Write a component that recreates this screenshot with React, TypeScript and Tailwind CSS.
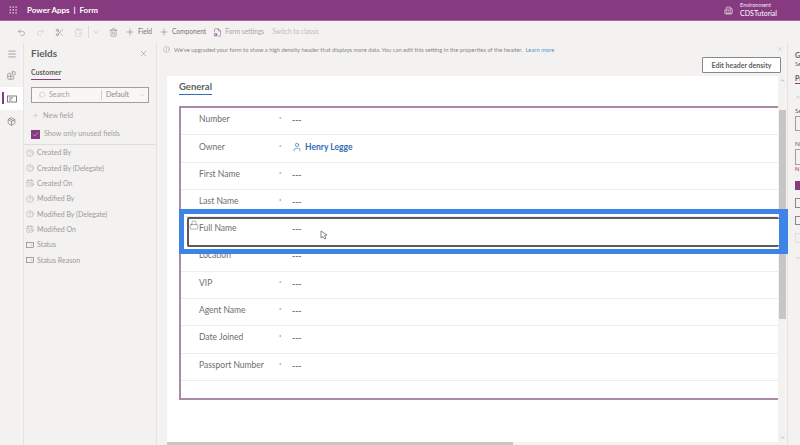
import { Undo2, Redo2, Scissors, ClipboardPaste, ChevronDown, Trash2, Plus, FileCog, Menu, Blocks, Package, X, Search, Check, CircleHelp, CalendarClock, User, Lock, Info, Grip, Building2, ChevronUp } from 'lucide-react';

function StatusIcon({ size = 8, className }: { size?: number; strokeWidth?: number; className?: string }) {
  return (
    <svg width={size} height={size} viewBox="0 0 10 10" fill="none" stroke="currentColor" strokeWidth="0.8" className={className}>
      <rect x="0.5" y="2" width="9" height="6" />
      <path d="M6.5 5h1.500" />
    </svg>
  );
}

const fields = [
  { name: 'Created By', icon: CircleHelp },
  { name: 'Created By (Delegate)', icon: CircleHelp },
  { name: 'Created On', icon: CalendarClock },
  { name: 'Modified By', icon: CircleHelp },
  { name: 'Modified By (Delegate)', icon: CircleHelp },
  { name: 'Modified On', icon: CalendarClock },
  { name: 'Status', icon: StatusIcon },
  { name: 'Status Reason', icon: StatusIcon },
];

const rows = [
  { label: 'Number', req: true },
  { label: 'Owner', req: true, owner: true },
  { label: 'First Name', req: true },
  { label: 'Last Name', req: true },
  { label: 'Full Name', locked: true },
  { label: 'Location' },
  { label: 'VIP', req: true },
  { label: 'Agent Name', req: true },
  { label: 'Date Joined', req: true },
  { label: 'Passport Number', req: true },
];

function FormRow({ row }: { row: (typeof rows)[number] }) {
  // the locked row is drawn by the highlight on top of the form
  if (row.locked) return <div className="h-[27.3px] shrink-0" />;

  return (
    <div className={`flex h-[27.3px] shrink-0 border-b border-[#ececec] pl-[18px] text-[8.5px] leading-[12px] text-[#6f6d6b] ${row.owner ? 'pt-[6px]' : 'pt-[5px]'}`}>
      <div className="w-[80px]">{row.label}</div>
      <div className={`w-[13px] text-[6px] ${row.req ? 'text-[#a4262c]' : 'text-transparent'}`}>*</div>
      {row.owner ? (
        <div className="flex h-[12px] items-center gap-[3px] font-bold text-[#2f6fb5]">
          <User size={10} strokeWidth={1.5} />
          <span>Henry Legge</span>
        </div>
      ) : (
        <div className="pt-[1px] font-bold text-[#7a7876]">---</div>
      )}
    </div>
  );
}

export default function App() {
  return (
    <div className="flex h-[445px] w-[800px] flex-col overflow-hidden bg-[#f3f2f1] font-['Lato',sans-serif]">
      {/* Top bar */}
      <div className="flex h-[21px] shrink-0 items-center border-b border-[#a06a9b] bg-[#863a80] pl-[8px] pr-[23px] text-white">
        <Grip size={10} strokeWidth={1.5} className="opacity-80" />
        <div className="ml-[9px] text-[8px] font-bold">Power Apps&nbsp; |&nbsp; Form</div>
        <div className="ml-auto flex items-center gap-[4px]">
          <Building2 size={9} strokeWidth={1.5} />
          <div className="ml-[3px] leading-none">
            <div className="text-[5.5px] opacity-90">Environment</div>
            <div className="mt-[1px] text-[7px]">CDSTutorial</div>
          </div>
        </div>
      </div>

      {/* Toolbar */}
      <div className="flex h-[22px] shrink-0 items-center pl-[17px] text-[6.6px] text-[#a8a6a4]">
        <Undo2 size={9} strokeWidth={1.25} className="text-[#7a7876]" />
        <Redo2 size={9} strokeWidth={1.25} className="ml-[10px] text-[#c2c0be]" />
        <Scissors size={9} strokeWidth={1.25} className="ml-[10px] text-[#6f6d6b]" />
        <ClipboardPaste size={9} strokeWidth={1.25} className="ml-[10px] text-[#c2c0be]" />
        <div className="ml-[5px] h-[12px] w-px bg-[#dcdad8]" />
        <ChevronDown size={8} strokeWidth={1.25} className="ml-[3px] text-[#a8a6a4]" />
        <Trash2 size={9} strokeWidth={1.25} className="ml-[8.500px] text-[#6f6d6b]" />
        <Plus size={10} strokeWidth={1.1} className="ml-[7.500px] text-[#605e5c]" />
        <span className="ml-[3px] text-[#777573]">Field</span>
        <Plus size={10} strokeWidth={1.1} className="ml-[7px] text-[#605e5c]" />
        <span className="ml-[3px] text-[#777573]">Component</span>
        <FileCog size={9} strokeWidth={1.25} className="ml-[6.500px] text-[#863a80]" />
        <span className="ml-[3.500px]">Form settings</span>
        <span className="ml-[8px] text-[#bdbbb9]">Switch to classic</span>
      </div>

      <div className="flex min-h-0 flex-1">
        {/* Left nav */}
        <div className="flex w-[23px] shrink-0 flex-col">
          <div className="flex h-[21px] items-center justify-center"><Menu size={10} strokeWidth={1.25} className="text-[#605e5c]" /></div>
          <div className="flex h-[23px] items-center justify-center"><Blocks size={9} strokeWidth={1.25} className="text-[#605e5c]" /></div>
          <div className="relative flex h-[23px] items-center justify-center bg-white">
            <div className="absolute left-[2px] top-[5px] h-[12px] w-[2px] bg-[#863a80]" />
            <svg width="10" height="10" viewBox="0 0 10 10" fill="none" stroke="#605e5c" strokeWidth="0.8">
              <rect x="0.5" y="2" width="9" height="6" />
              <path d="M2 4h4M2 6h2.500" />
            </svg>
          </div>
          <div className="flex h-[23px] items-center justify-center"><Package size={9} strokeWidth={1.5} className="text-[#605e5c]" /></div>
        </div>

        {/* Fields panel */}
        <div className="flex w-[134px] shrink-0 flex-col border-x border-[#e6e4e2]">
          <div className="flex items-center justify-between pl-[7px] pr-[8px] pt-[3px]">
            <span className="text-[10px] font-bold text-[#605e5c]">Fields</span>
            <X size={9} strokeWidth={1} className="text-[#605e5c]" />
          </div>
          <div className="ml-[7px] mt-[6px] w-[30px] border-b border-[#863a80] pb-[1px] text-[7px] font-bold text-[#605e5c]">Customer</div>
          <div className="ml-[7px] mt-[7px] flex h-[16px] w-[118px] items-center border border-[#a19f9d] bg-[#f8f7f6] text-[7px] text-[#a19f9d]">
            <Search size={8} strokeWidth={1} className="ml-[6px] -scale-x-100" />
            <span className="ml-[3px] w-[52px]">Search</span>
            <div className="h-[10px] w-px bg-[#d2d0ce]" />
            <span className="ml-[4px] text-[#8a8886]">Default</span>
            <ChevronDown size={8} strokeWidth={1} className="ml-auto mr-[2px]" />
          </div>
          <div className="ml-[8px] mt-[8px] flex items-center text-[7.2px] text-[#a19f9d]">
            <Plus size={7} strokeWidth={1} />
            <span className="ml-[4px]">New field</span>
          </div>
          <div className="ml-[7px] mt-[8px] flex items-center text-[7.2px] text-[#a19f9d]">
            <div className="flex h-[9px] w-[9px] items-center justify-center bg-[#863a80] text-white"><Check size={7} strokeWidth={1.5} /></div>
            <span className="ml-[4px]">Show only unused fields</span>
          </div>
          <div className="mt-[4px] flex flex-col border-t border-[#dfdddb] text-[7px] text-[#9b9997]">
            {fields.map((field) => (
              <div key={field.name} className="flex h-[15.3px] items-center pl-[2px]">
                <field.icon size={8} strokeWidth={1} className="text-[#7a7876]" />
                <span className="ml-[3px]">{field.name}</span>
              </div>
            ))}
          </div>
        </div>

        {/* Canvas */}
        <div className="relative min-w-0 flex-1">
          <div className="flex h-[33px] items-start pl-[6px] pt-[3px] text-[5.8px] text-[#8a8886]">
            <Info size={7} strokeWidth={1} className="text-[#605e5c]" />
            <span className="ml-[4px]">We've upgraded your form to show a high density header that displays more data. You can edit this setting in the properties of the header.</span>
            <span className="ml-[3px] text-[#5b93c4]">Learn more</span>
            <X size={6} strokeWidth={1} className="absolute left-[620px] top-[3px] text-[#8a8886]" />
          </div>
          <div className="absolute left-[545px] top-[14px] flex h-[16px] w-[79px] items-center justify-center rounded-[1px] border border-[#8a8886] bg-white text-[7px] font-bold text-[#605e5c]">
            Edit header density
          </div>

          {/* Form surface */}
          <div className="ml-[10px] flex h-[366px] w-[611px] flex-col overflow-hidden bg-white pl-[12px]">
            <div className="flex h-[30px] shrink-0 items-start pt-[5px]">
              <div className="border-b border-[#2f6fb5] pb-[1px] text-[9.5px] font-bold leading-[12px] text-[#605e5c]">General</div>
            </div>
            <div className="flex h-[294px] shrink-0 flex-col border-y-2 border-l-2 border-[#ab8aa8]">
              {rows.map((row) => (
                <FormRow key={row.label} row={row} />
              ))}
            </div>
          </div>

          {/* Form scrollbar */}
          <div className="absolute left-[621px] top-[33px] flex h-[366px] w-[8px] flex-col items-center bg-[#f3f2f1]">
            <ChevronUp size={5} strokeWidth={2} className="mt-[2px] text-[#605e5c]" />
            <div className="mt-[27px] h-[209px] w-[7px] bg-[#c8c6c4]" />
            <ChevronDown size={5} strokeWidth={2} className="mb-[2px] mt-auto text-[#605e5c]" />
          </div>
          <div className="absolute bottom-0 left-[6px] h-[3px] w-[623px] bg-[#f3f2f1]">
            <div className="ml-[4px] h-full w-[346px] bg-[#c8c6c4]" />
          </div>

          {/* Highlighted row */}
          <div className="absolute left-[22px] top-[166px] flex h-[45px] w-[609px] items-stretch border-[5px] border-r-[9px] border-[#3e84e6] pb-[2px] pl-[3px] pt-[3px]">
            <div className="relative flex-1 rounded-[2px] border-y-2 border-l-2 border-[#5c5a58] bg-white">
              <Lock size={10} strokeWidth={1.2} className="absolute left-0 top-[1px] text-[#605e5c]" />
              <span className="absolute left-[10px] top-[3px] text-[8.5px] text-[#6f6d6b]">Full Name</span>
              <span className="absolute left-[103px] top-[4px] text-[8.5px] font-bold text-[#7a7876]">---</span>
              <svg width="8" height="10" viewBox="0 0 8 10" className="absolute left-[131px] top-[11px]">
                <path d="M1 1v7l2-1.500L4.500 9 6 8.300 4.600 5.500 7 5z" fill="#fff" stroke="#555" strokeWidth="0.7" />
              </svg>
            </div>
          </div>
        </div>

        {/* Right panel */}
        <div className="flex w-[13px] shrink-0 flex-col overflow-hidden border-l border-[#e6e4e2] pl-[7px] text-[7px] leading-[9px] text-[#605e5c]">
          <span className="mt-[8px] font-bold">G</span>
          <span className="text-[5.5px]">Se</span>
          <span className="mt-[5px] w-[10px] border-b border-[#863a80] font-bold">Pr</span>
          <ChevronUp size={6} className="mt-[10px] shrink-0 text-[#a19f9d]" />
          <span className="mt-[6px] text-[6.5px]">Se</span>
          <div className="mt-[1px] h-[15px] w-[10px] shrink-0 border border-[#a19f9d]" />
          <span className="mt-[8px] text-[6.5px]">N</span>
          <div className="mt-[1px] h-[16px] w-[10px] shrink-0 border border-[#a19f9d]" />
          <span className="text-[5.5px] text-[#a4262c]">N</span>
          <div className="mt-[7px] h-[9px] w-[10px] shrink-0 bg-[#863a80]" />
          <div className="mt-[8px] h-[10px] w-[10px] shrink-0 border border-[#8a8886]" />
          <div className="mt-[8px] h-[9px] w-[10px] shrink-0 border border-[#8a8886]" />
          <div className="mt-[8px] h-[10px] w-[10px] shrink-0 border border-[#e1dfdd]" />
          <ChevronDown size={6} className="mt-[12px] shrink-0 text-[#a19f9d]" />
        </div>
      </div>
    </div>
  );
}
